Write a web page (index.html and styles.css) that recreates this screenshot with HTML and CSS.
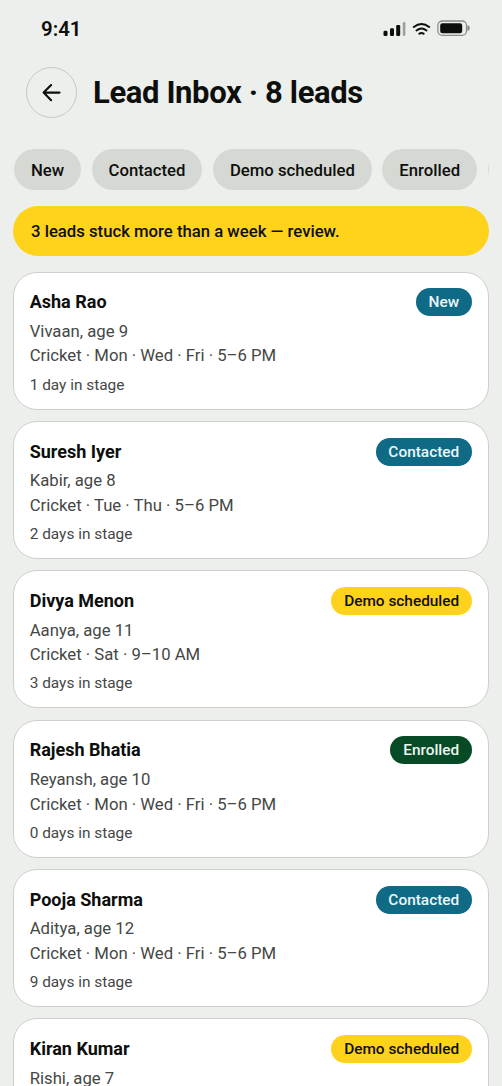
FILE: index.html
```html
<!DOCTYPE html>
<html lang="en">
<head>
<meta charset="utf-8">
<title>Lead Inbox</title>
<link rel="stylesheet" href="styles.css">
</head>
<body>
<div class="screen">
  <div class="status">
    <span class="time">9:41</span>
    <svg class="system" width="90" height="20" viewBox="0 0 90 20" aria-hidden="true">
      <g fill="#0d0f0d">
        <rect x="0.5" y="10.8" width="4" height="5.2" rx="1.2"/>
        <rect x="7" y="8.2" width="4" height="7.8" rx="1.2"/>
        <rect x="13.2" y="5" width="4" height="11" rx="1.2"/>
        <rect x="19.8" y="2" width="2.6" height="14" rx="1.2" opacity=".35"/>
        <rect x="57.2" y="3.2" width="22" height="10" rx="2.2"/>
      </g>
      <g fill="none" stroke="#0d0f0d" stroke-width="2" stroke-linecap="round">
        <path d="M30.8 7Q38.5 1 46.2 7"/>
        <path d="M33.5 10.5Q38.5 6.5 43.5 10.5"/>
        <path d="M36.4 13.6Q38.5 12.2 40.6 13.6"/>
      </g>
      <rect x="54.9" y="1" width="28.6" height="14.4" rx="4.4" fill="none" stroke="#8b8d8a" stroke-width="1.3"/>
      <path d="M84.3 5.5h1q1.5 0 1.5 2.6t-1.5 2.6h-1z" fill="#8b8d8a"/>
    </svg>
  </div>
  <header class="header">
    <span class="back">
      <svg width="20" height="20" viewBox="0 0 20 20" fill="none" stroke="#0d0f0d" stroke-width="2.1" stroke-linecap="round" stroke-linejoin="round"><path d="M17.5 9.6H2M9.1 2L1.6 9.6l7.5 7.6"/></svg>
    </span>
    <h1 class="title">Lead Inbox · 8 leads</h1>
  </header>
  <div class="chips">
    <span class="chip">New</span><span class="chip">Contacted</span><span class="chip">Demo scheduled</span><span class="chip">Enrolled</span><span class="chip next"></span>
  </div>
  <div class="banner">3 leads stuck more than a week — review.</div>
  <main class="list">
    <article class="card">
      <div class="top"><h2 class="name">Asha Rao</h2><span class="badge teal">New</span></div>
      <p class="line">Vivaan, age 9</p><p class="line">Cricket · Mon · Wed · Fri · 5–6 PM</p><p class="stage">1 day in stage</p>
    </article>
    <article class="card">
      <div class="top"><h2 class="name">Suresh Iyer</h2><span class="badge teal">Contacted</span></div>
      <p class="line">Kabir, age 8</p><p class="line">Cricket · Tue · Thu · 5–6 PM</p><p class="stage">2 days in stage</p>
    </article>
    <article class="card">
      <div class="top"><h2 class="name">Divya Menon</h2><span class="badge yellow">Demo scheduled</span></div>
      <p class="line">Aanya, age 11</p><p class="line">Cricket · Sat · 9–10 AM</p><p class="stage">3 days in stage</p>
    </article>
    <article class="card">
      <div class="top"><h2 class="name">Rajesh Bhatia</h2><span class="badge green">Enrolled</span></div>
      <p class="line">Reyansh, age 10</p><p class="line">Cricket · Mon · Wed · Fri · 5–6 PM</p><p class="stage">0 days in stage</p>
    </article>
    <article class="card">
      <div class="top"><h2 class="name">Pooja Sharma</h2><span class="badge teal">Contacted</span></div>
      <p class="line">Aditya, age 12</p><p class="line">Cricket · Mon · Wed · Fri · 5–6 PM</p><p class="stage">9 days in stage</p>
    </article>
    <article class="card">
      <div class="top"><h2 class="name">Kiran Kumar</h2><span class="badge yellow">Demo scheduled</span></div>
      <p class="line">Rishi, age 7</p>
    </article>
  </main>
</div>
</body>
</html>
```
FILE: styles.css
```css
* { box-sizing: border-box; margin: 0; }
body { background: #edefec; font-family: Roboto, sans-serif; color: #0d0f0d; }
.screen { height: 1086px; overflow: hidden; padding: 0 13px; display: flex; flex-direction: column; }
.status { flex: none; height: 67px; padding: 18px 16px 0 28px; display: flex; justify-content: space-between; align-items: flex-start; }
.time { font-size: 20.4px; line-height: 23px; font-weight: 600; }
.system { margin-top: 2px; }
.header { flex: none; height: 51px; padding-left: 13px; display: flex; align-items: center; gap: 16px; }
.back { width: 51px; height: 51px; border: 1px solid #c5c8c3; border-radius: 50%; display: flex; align-items: center; justify-content: center; }
.title { font-size: 31px; line-height: 36px; font-weight: 700; letter-spacing: -.37px; white-space: nowrap; }
.chips { flex: none; margin-top: 31px; padding-left: 1px; display: flex; gap: 10.7px; overflow: hidden; }
.chip { flex: none; height: 41px; padding: 0 16.9px; border-radius: 21px; background: #d6d8d3; font-size: 16.72px; line-height: 43px; font-weight: 500; white-space: nowrap; }
.next { width: 72px; }
.banner { flex: none; height: 50px; margin-top: 16px; padding: 0 0 0 18px; border-radius: 25px; background: #ffd21c; font-size: 16.72px; line-height: 50px; font-weight: 500; }
.list { flex: none; margin-top: 15.7px; display: flex; flex-direction: column; gap: 11.3px; }
.card { height: 138.05px; padding: 15.7px 16px 0 15.7px; border: 1px solid #cdd0cb; border-radius: 24px; background: #fff; }
.top { display: flex; justify-content: space-between; align-items: center; height: 28px; }
.name { font-size: 18px; line-height: 24px; font-weight: 700; }
.badge { height: 28px; padding: 0 12.8px; border-radius: 14px; font-size: 15.4px; line-height: 28px; font-weight: 500; }
.teal { background: #0f6a86; color: #edf6f8; }
.yellow { background: #ffd21c; color: #0d0f0d; }
.green { background: #064b25; color: #edf6f0; }
.line { font-size: 16.72px; line-height: 24.4px; color: #454745; }
.top + .line { margin-top: 2.7px; }
.stage { margin-top: 6.7px; font-size: 15.4px; line-height: 20px; color: #454745; }
```
